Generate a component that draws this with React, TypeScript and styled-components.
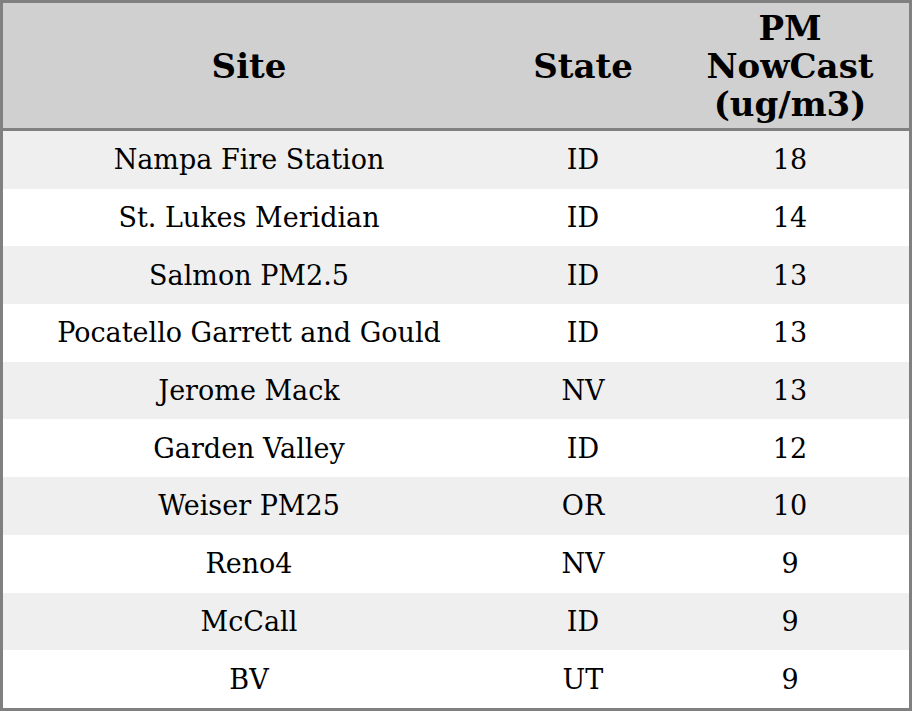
import React from 'react'
import styled, {createGlobalStyle} from 'styled-components'

const GlobalStyle = createGlobalStyle`
  html, body {
    margin: 0;
    padding: 0;
    background: #ffffff;
  }
  body {
    font-family: 'DejaVu Serif', serif;
  }
`

const Table = styled.table`
  width: 912px;
  border-collapse: collapse;
  border: 3px solid #808080;
  font-family: 'DejaVu Serif', serif;
  color: #000;
  table-layout: fixed;
`

const HeadCell = styled.th<{width: number}>`
  width: ${(p) => p.width}px;
  height: 125px;
  padding: 0;
  background: #d0d0d0;
  border-bottom: 3px solid #808080;
  font-size: 34px;
  font-weight: bold;
  line-height: 38px;
  text-align: center;
  vertical-align: middle;
`

const Row = styled.tr<{striped: boolean}>`
  background: ${(p) => (p.striped ? '#efefef' : '#ffffff')};
`

const Cell = styled.td`
  height: 57.7px;
  padding: 0;
  font-size: 27px;
  text-align: center;
  vertical-align: middle;
`

type Reading = {site: string; state: string; value: number}

const readings: Reading[] = [
  {site: 'Nampa Fire Station', state: 'ID', value: 18},
  {site: 'St. Lukes Meridian', state: 'ID', value: 14},
  {site: 'Salmon PM2.5', state: 'ID', value: 13},
  {site: 'Pocatello Garrett and Gould', state: 'ID', value: 13},
  {site: 'Jerome Mack', state: 'NV', value: 13},
  {site: 'Garden Valley', state: 'ID', value: 12},
  {site: 'Weiser PM25', state: 'OR', value: 10},
  {site: 'Reno4', state: 'NV', value: 9},
  {site: 'McCall', state: 'ID', value: 9},
  {site: 'BV', state: 'UT', value: 9},
]

const App: React.FC = () => {
  return (
    <>
      <GlobalStyle />
      <Table>
        <thead>
          <tr>
            <HeadCell width={492}>Site</HeadCell>
            <HeadCell width={176}>State</HeadCell>
            <HeadCell width={238}>
              PM
              <br />
              NowCast
              <br />
              (ug/m3)
            </HeadCell>
          </tr>
        </thead>
        <tbody>
          {readings.map((r, i) => (
            <Row key={r.site} striped={i % 2 === 0}>
              <Cell>{r.site}</Cell>
              <Cell>{r.state}</Cell>
              <Cell>{r.value}</Cell>
            </Row>
          ))}
        </tbody>
      </Table>
    </>
  )
}

export default App
